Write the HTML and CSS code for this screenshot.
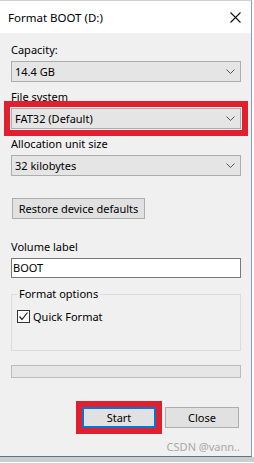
FILE: index.html
```html
<!DOCTYPE html>
<html lang="en">
<head>
  <meta charset="UTF-8">
  <title>Format BOOT (D:)</title>
  <link rel="stylesheet" href="styles.css">
</head>
<body>
  <div class="window">
    <div class="titlebar">
      <span class="title">Format BOOT (D:)</span>
      <svg class="close" width="11" height="11" viewBox="0 0 11 11">
        <path d="M0.5 0.5 L10.5 10.5 M10.5 0.5 L0.5 10.5" stroke="#111" stroke-width="1.1" fill="none"/>
      </svg>
    </div>

    <div class="dialog">
      <div class="field-label">Capacity:</div>
      <div class="combo">
        <span>14.4 GB</span>
        <svg class="chevron" width="9" height="5" viewBox="0 0 9 5"><polyline points="0.5,0.5 4.5,4.5 8.5,0.5" fill="none" stroke="#555" stroke-width="1"/></svg>
      </div>

      <div class="field-label gap">File system</div>
      <div class="combo marked">
        <span>FAT32 (Default)</span>
        <svg class="chevron" width="9" height="5" viewBox="0 0 9 5"><polyline points="0.5,0.5 4.5,4.5 8.5,0.5" fill="none" stroke="#555" stroke-width="1"/></svg>
      </div>

      <div class="field-label gap">Allocation unit size</div>
      <div class="combo">
        <span>32 kilobytes</span>
        <svg class="chevron" width="9" height="5" viewBox="0 0 9 5"><polyline points="0.5,0.5 4.5,4.5 8.5,0.5" fill="none" stroke="#555" stroke-width="1"/></svg>
      </div>

      <button class="btn restore">Restore device defaults</button>

      <div class="field-label volume">Volume label</div>
      <div class="textbox">BOOT</div>

      <fieldset class="group">
        <legend>Format options</legend>
        <div class="check-row">
          <span class="checkbox">
            <svg width="11" height="11" viewBox="0 0 11 11"><polyline points="1.5,5.5 4,8.5 9.5,1.5" fill="none" stroke="#222" stroke-width="1.2"/></svg>
          </span>
          Quick Format
        </div>
      </fieldset>

      <div class="progress"></div>

      <div class="actions">
        <button class="btn start">Start</button>
        <button class="btn">Close</button>
      </div>

      <div class="watermark">CSDN @vann..</div>
    </div>
  </div>
  <div class="desk"></div>
</body>
</html>
```

FILE: styles.css
```css
body {
  margin: 0;
  background: #fff;
  font-family: "Noto Sans", "Open Sans", sans-serif;
  font-size: 11px;
  color: #000;
}

.window {
  width: 251px;
  background: #f0f0f0;
  border-top: 1px solid #cfcfcf;
  border-right: 1px solid #7e9fbd;
  border-bottom: 1px solid #56758f;
}

.titlebar {
  height: 32px;
  background: #fff;
  display: flex;
  align-items: center;
  justify-content: space-between;
  padding: 0 10px 0 8px;
}

.title {
  font-size: 11.5px;
}

.close {
  display: block;
}

.dialog {
  padding: 9px 10px 1px 11px;
}

.field-label {
  line-height: 16px;
  height: 16px;
}

.field-label.gap {
  margin-top: 7px;
}

.combo {
  margin-top: 3px;
  height: 21px;
  box-sizing: border-box;
  border: 1px solid #adadad;
  background: #e5e5e5;
  display: flex;
  align-items: center;
  justify-content: space-between;
  padding: 0 5px 0 3px;
}

.chevron {
  display: block;
}

.combo.marked {
  outline: 6px solid #e0202e;
  outline-offset: 1px;
}

.btn {
  font-family: inherit;
  font-size: 11px;
  color: #000;
  background: #e1e1e1;
  border: 1px solid #adadad;
  height: 21px;
  padding: 0;
  box-sizing: border-box;
}

.restore {
  display: block;
  margin: 22px 0 0 1px;
  width: 133px;
}

.field-label.volume {
  margin-top: 20px;
}

.textbox {
  margin-top: 3px;
  height: 20px;
  box-sizing: border-box;
  border: 1px solid #7a7a7a;
  background: #fff;
  line-height: 18px;
  padding-left: 1px;
}

.group {
  margin: 8px 0 0;
  padding: 0 5px 27px;
  border: 1px solid #dcdcdc;
}

.group legend {
  padding: 0 2px;
  line-height: 16px;
}

.check-row {
  margin-top: 8px;
  display: flex;
  align-items: center;
  gap: 3px;
  height: 13px;
}

.checkbox {
  width: 13px;
  height: 13px;
  box-sizing: border-box;
  border: 1px solid #333;
  background: #fff;
  display: flex;
  align-items: center;
  justify-content: center;
}

.checkbox svg {
  display: block;
}

.progress {
  margin-top: 14px;
  height: 13px;
  box-sizing: border-box;
  border: 1px solid #bcbcbc;
  background: #e6e6e6;
}

.actions {
  margin-top: 29px;
  display: flex;
  justify-content: flex-end;
  gap: 9px;
  padding-right: 2px;
}

.actions .btn {
  width: 74px;
}

.start {
  border: 2px solid #0078d7;
  outline: 6px solid #e0202e;
  outline-offset: 0;
}

.watermark {
  margin-top: 11px;
  height: 16px;
  line-height: 16px;
  text-align: right;
  padding-right: 1px;
  color: #a8a8a8;
}

.desk {
  height: 5px;
  background: #cdcdcd;
}
```
